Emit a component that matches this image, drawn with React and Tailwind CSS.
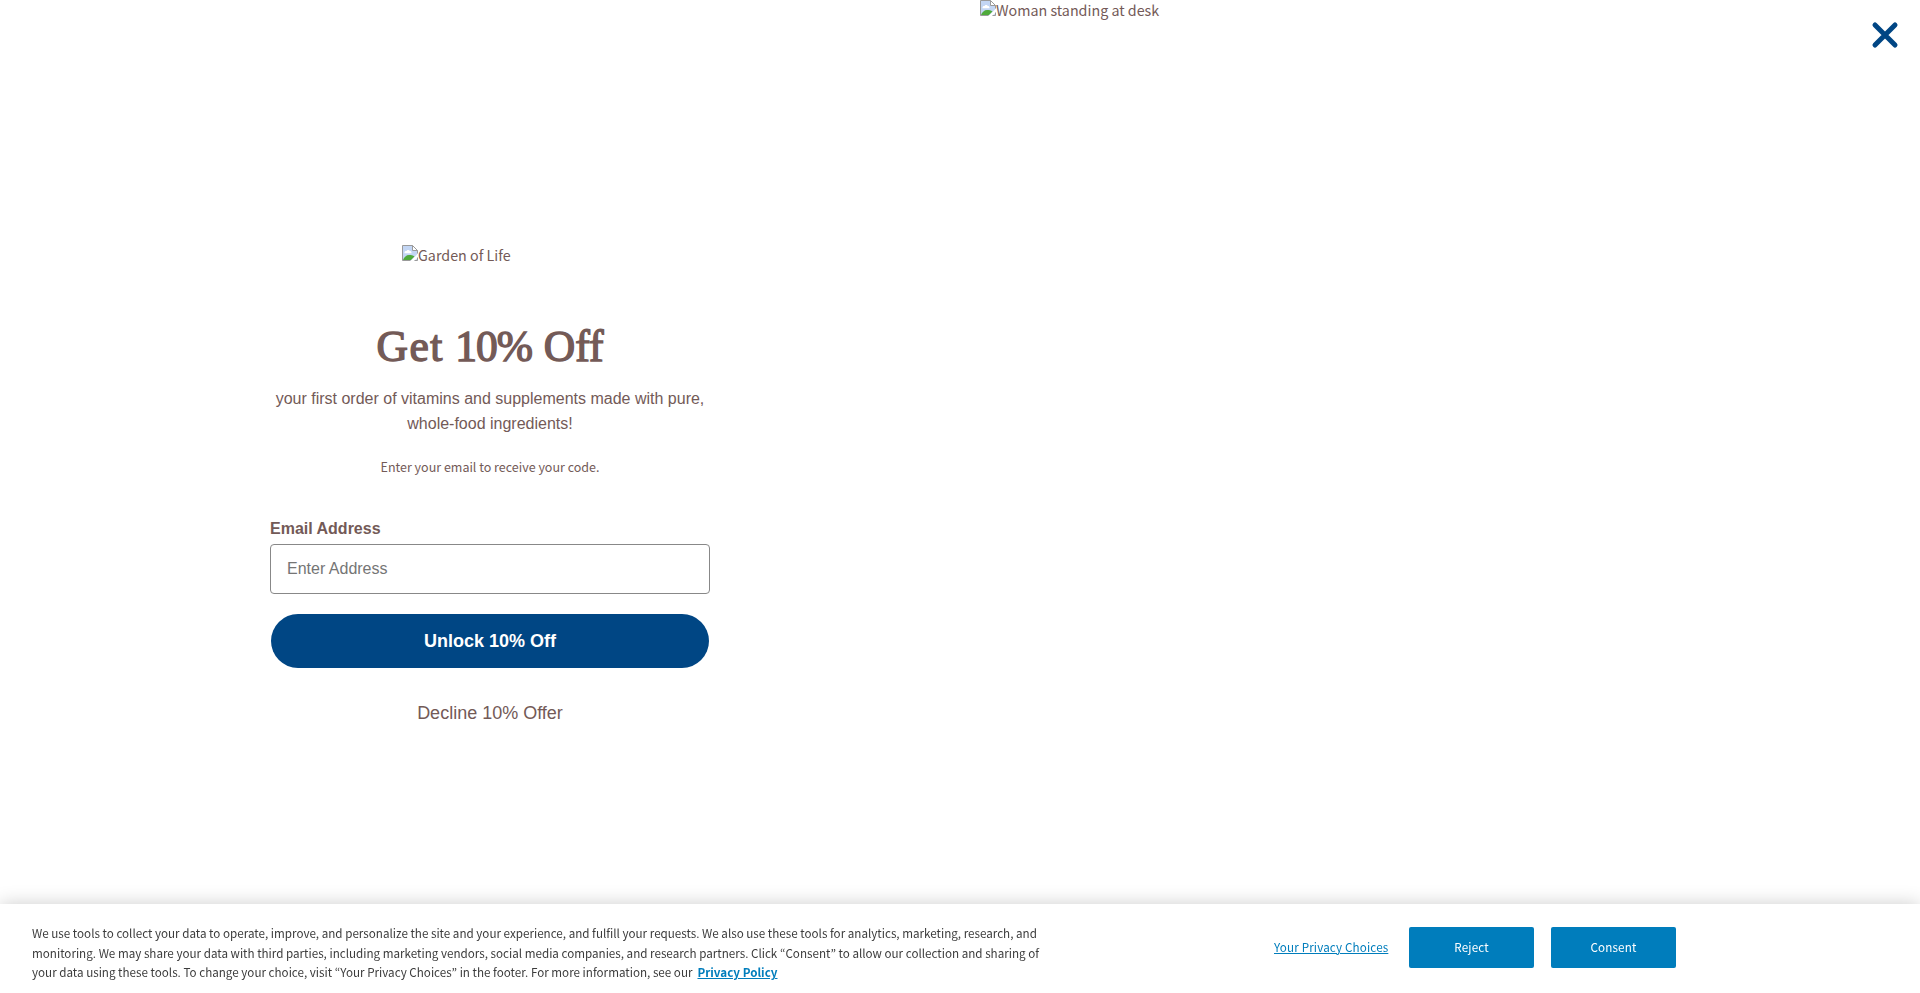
import React, { useState } from 'react';

function BrokenImage({ alt, className }) {
  return (
    <div className={`flex items-start ${className}`} role="img" aria-label={alt}>
      <svg width="16" height="16" viewBox="0 0 16 16" className="shrink-0" aria-hidden="true">
        <path d="M.5.5h10l5 5v10H.5z" fill="#c3d6f4" />
        <path d="M2.500 8.200V7.500c0-1 1-1.600 2-1.400.3-1.600 2.800-1.600 3.400 0 1 0 1.600.7 1.600 1.500v.6z" fill="#fff" />
        <path d="M1 15c1-3 3.500-5 6-5 2 0 4 0 5.500 1.500L9 15z" fill="#4faa3b" />
        <path d="M16 8.500 8.500 16H12l4-3.500z" fill="#fff" />
        <path d="M8.500 15.500H.5V.5h10l5 5v3" fill="none" stroke="#9a9a9a" />
        <path d="M10.500.5v5h5z" fill="#fff" stroke="#9a9a9a" />
        <path d="M12.500 15.500h3v-3" fill="none" stroke="#9a9a9a" />
      </svg>
      <span className="whitespace-nowrap">{alt}</span>
    </div>
  );
}

function SignupForm() {
  const [email, setEmail] = useState('');

  return (
    <div className="flex w-[440px] flex-col items-center text-center">
      <BrokenImage
        alt="Garden of Life"
        className="mr-[68px] w-[108px] text-[14.3px] leading-[19px]"
      />

      <h1 className="mt-[49px] whitespace-nowrap font-['Liberation_Serif',serif] text-[43.5px] font-normal leading-[66px] [-webkit-text-stroke:1.4px_#735a57]">
        <span className="tracking-[1.5px] [word-spacing:-1px]">Get </span>
        <span className="tracking-[-1px] [word-spacing:2px]">10% </span>
        Off
      </h1>

      <p className="mt-[7px] font-['Liberation_Sans',sans-serif] text-base leading-[25px]">
        your first order of vitamins and supplements made with pure, whole-food ingredients!
      </p>
      <p className="mt-[21px] text-[12.5px] leading-[20px]">Enter your email to receive your code.</p>

      <form
        className="mt-10 flex w-full flex-col font-['Liberation_Sans',sans-serif]"
        onSubmit={(event) => event.preventDefault()}
      >
        <label htmlFor="email" className="text-left text-base font-bold leading-6">
          Email Address
        </label>
        <input
          id="email"
          type="email"
          value={email}
          onChange={(event) => setEmail(event.target.value)}
          placeholder="Enter Address"
          className="mt-[3px] h-[50px] rounded border border-[#888888] px-4 text-base placeholder:text-[#757575]"
        />
        <button
          type="submit"
          className="mx-px mt-5 h-[54px] rounded-[27px] bg-[#004684] text-lg font-bold text-white"
        >
          Unlock 10% Off
        </button>
        <button type="button" className="mt-[31px] text-lg leading-7">
          Decline 10% Offer
        </button>
      </form>
    </div>
  );
}

function CookieBanner() {
  return (
    <div className="fixed inset-x-0 bottom-0 flex h-[89px] bg-white text-[11.65px] text-[#3c3c3c] shadow-[0_0_18px_rgba(0,0,0,0.2)]">
      <p className="ml-8 mt-[19.4px] w-[1030px] leading-[19.5px]">
        <span className="block whitespace-nowrap">
          We use tools to collect your data to operate, improve, and personalize the site and your experience, and fulfill your requests. We also use these tools for analytics, marketing, research, and
        </span>
        <span className="block whitespace-nowrap">
          monitoring. We may share your data with third parties, including marketing vendors, social media companies, and research partners. Click “Consent” to allow our collection and sharing of
        </span>
        <span className="block whitespace-nowrap">
          your data using these tools. To change your choice, visit “Your Privacy Choices” in the footer. For more information, see our
          <a href="#privacy" className="ml-[5px] font-bold text-[#007dbc] underline">
            Privacy Policy
          </a>
        </span>
      </p>

      <div className="ml-[212px] mt-[22.5px] flex h-[41.5px] items-center tracking-[0.15px]">
        <button type="button" className="w-[114px] whitespace-nowrap pb-px text-left text-[#007dbc] underline">
          Your Privacy Choices
        </button>
        <button type="button" className="ml-[21px] h-full w-[125px] rounded-[2px] bg-[#007dbc] pb-px text-white">
          Reject
        </button>
        <button type="button" className="ml-[17px] h-full w-[125px] rounded-[2px] bg-[#007dbc] pb-px text-white">
          Consent
        </button>
      </div>
    </div>
  );
}

export default function App() {
  return (
    <div className="relative flex h-[993px] w-[1920px] overflow-hidden bg-white font-['Noto_Sans_CJK_KR',sans-serif] text-[#735a57]">
      <section className="flex w-[980px] justify-center pt-[245px]">
        <SignupForm />
      </section>
      <section className="flex-1">
        <BrokenImage alt="Woman standing at desk" className="text-[14.3px] leading-[19px]" />
      </section>

      <button type="button" aria-label="Close" className="absolute right-[21px] top-[21px]">
        <svg width="28" height="28" viewBox="0 0 28 28" fill="none" stroke="#004684" strokeWidth="5" strokeLinecap="round">
          <path d="m4 4 20 20M24 4 4 24" />
        </svg>
      </button>

      <CookieBanner />
    </div>
  );
}
